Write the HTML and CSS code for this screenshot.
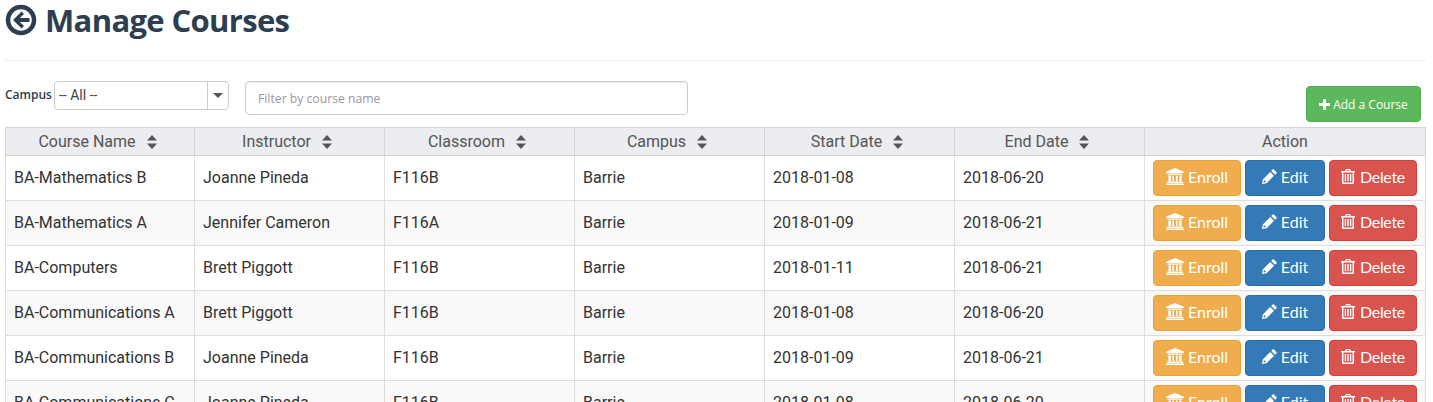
FILE: index.html
```html
<!DOCTYPE html>
<html lang="en">
<head>
<meta charset="utf-8">
<title>Manage Courses</title>
<link rel="stylesheet" href="styles.css">
</head>
<body>
<svg class="defs" width="0" height="0" aria-hidden="true">
  <symbol id="i-sort" viewBox="0 0 10 14"><path d="M5 0 10 5.600H0ZM0 8.400H10L5 14Z"/></symbol>
  <symbol id="i-bank" viewBox="0 0 18 17"><path d="M9 0 18 3.800V5H0V3.800ZM1.500 5.600H16.500V6.800H1.500ZM2.400 7.400H5V13H2.400ZM6.400 7.400H8V13H6.400ZM10 7.400H11.600V13H10ZM13 7.400H15.600V13H13ZM1.200 13.600H16.800V15H1.200ZM0 15.400H18V17H0Z"/></symbol>
  <symbol id="i-pencil" viewBox="0 0 15 15"><path d="M10.600.6a1 1 0 0 1 1.400 0l2.400 2.400a1 1 0 0 1 0 1.400L13 5.800 9.200 2ZM8.200 3 12 6.800 4.600 14.200 0 15l.8-4.600ZM2 10.900 1.500 13.500 4.100 13Z" fill-rule="evenodd"/></symbol>
  <symbol id="i-trash" viewBox="0 0 14 15"><path d="M5 0H9L10 2H14V3.600H13V13.200C13 14.200 12.400 15 11.600 15H2.400C1.600 15 1 14.200 1 13.200V3.600H0V2H4ZM5.500 1.200 5.200 2H8.800L8.500 1.200ZM2.500 3.600V13.200C2.500 13.400 2.600 13.500 2.700 13.500H11.300C11.400 13.500 11.500 13.400 11.500 13.200V3.600ZM3.700 5H5.100V12.200H3.700ZM6.300 5H7.700V12.200H6.300ZM8.900 5H10.300V12.200H8.900Z" fill-rule="evenodd"/></symbol>
</svg>
<header class="page-title">
  <svg class="back-icon" viewBox="0 0 32 32" aria-hidden="true">
    <circle cx="16" cy="16" r="13" fill="none" stroke="currentColor" stroke-width="4.500"/>
    <path d="M16.600 7.600 8 16l8.600 8.400 2.400-2.400-4.200-4H24.500v-4H14.800l4.200-4Z" fill="currentColor"/>
  </svg>
  <h1>Manage Courses</h1>
</header>
<hr class="rule">
<section class="filters">
  <div class="filter-left">
    <label class="campus-label">Campus</label>
    <div class="select-box">
      <span class="select-value">-- All --</span>
      <span class="select-arrow"><i></i></span>
    </div>
    <input class="name-filter" type="text" placeholder="Filter by course name">
  </div>
  <button class="btn add-btn"><svg class="plus" viewBox="0 0 12 12" aria-hidden="true"><path d="M4.400 0H7.600V4.400H12V7.600H7.600V12H4.400V7.600H0V4.400H4.400Z"/></svg>Add a Course</button>
</section>
<table class="courses">
  <thead>
    <tr>
      <th class="sortable"><span>Course Name</span><svg class="sort"><use href="#i-sort"/></svg></th>
      <th class="sortable"><span>Instructor</span><svg class="sort"><use href="#i-sort"/></svg></th>
      <th class="sortable"><span>Classroom</span><svg class="sort"><use href="#i-sort"/></svg></th>
      <th class="sortable"><span>Campus</span><svg class="sort"><use href="#i-sort"/></svg></th>
      <th class="sortable"><span>Start Date</span><svg class="sort"><use href="#i-sort"/></svg></th>
      <th class="sortable"><span>End Date</span><svg class="sort"><use href="#i-sort"/></svg></th>
      <th>Action</th>
    </tr>
  </thead>
  <tbody>
    <tr><td>BA-Mathematics B</td><td>Joanne Pineda</td><td>F116B</td><td>Barrie</td><td>2018-01-08</td><td>2018-06-20</td>
      <td class="actions"><a class="btn enroll"><svg class="ic ic-bank"><use href="#i-bank"/></svg>Enroll</a><a class="btn edit"><svg class="ic ic-pencil"><use href="#i-pencil"/></svg>Edit</a><a class="btn delete"><svg class="ic"><use href="#i-trash"/></svg>Delete</a></td></tr>
    <tr><td>BA-Mathematics A</td><td>Jennifer Cameron</td><td>F116A</td><td>Barrie</td><td>2018-01-09</td><td>2018-06-21</td>
      <td class="actions"><a class="btn enroll"><svg class="ic ic-bank"><use href="#i-bank"/></svg>Enroll</a><a class="btn edit"><svg class="ic ic-pencil"><use href="#i-pencil"/></svg>Edit</a><a class="btn delete"><svg class="ic"><use href="#i-trash"/></svg>Delete</a></td></tr>
    <tr><td>BA-Computers</td><td>Brett Piggott</td><td>F116B</td><td>Barrie</td><td>2018-01-11</td><td>2018-06-21</td>
      <td class="actions"><a class="btn enroll"><svg class="ic ic-bank"><use href="#i-bank"/></svg>Enroll</a><a class="btn edit"><svg class="ic ic-pencil"><use href="#i-pencil"/></svg>Edit</a><a class="btn delete"><svg class="ic"><use href="#i-trash"/></svg>Delete</a></td></tr>
    <tr><td>BA-Communications A</td><td>Brett Piggott</td><td>F116B</td><td>Barrie</td><td>2018-01-08</td><td>2018-06-20</td>
      <td class="actions"><a class="btn enroll"><svg class="ic ic-bank"><use href="#i-bank"/></svg>Enroll</a><a class="btn edit"><svg class="ic ic-pencil"><use href="#i-pencil"/></svg>Edit</a><a class="btn delete"><svg class="ic"><use href="#i-trash"/></svg>Delete</a></td></tr>
    <tr><td>BA-Communications B</td><td>Joanne Pineda</td><td>F116B</td><td>Barrie</td><td>2018-01-09</td><td>2018-06-21</td>
      <td class="actions"><a class="btn enroll"><svg class="ic ic-bank"><use href="#i-bank"/></svg>Enroll</a><a class="btn edit"><svg class="ic ic-pencil"><use href="#i-pencil"/></svg>Edit</a><a class="btn delete"><svg class="ic"><use href="#i-trash"/></svg>Delete</a></td></tr>
    <tr><td>BA-Communications C</td><td>Joanne Pineda</td><td>F116B</td><td>Barrie</td><td>2018-01-08</td><td>2018-06-20</td>
      <td class="actions"><a class="btn enroll"><svg class="ic ic-bank"><use href="#i-bank"/></svg>Enroll</a><a class="btn edit"><svg class="ic ic-pencil"><use href="#i-pencil"/></svg>Edit</a><a class="btn delete"><svg class="ic"><use href="#i-trash"/></svg>Delete</a></td></tr>
  </tbody>
</table>
</body>
</html>
```
FILE: styles.css
```css
* { box-sizing: border-box; }
html, body { height: 402px; overflow: hidden; }
body {
  margin: 0;
  padding: 0 7px 0 5px;
  background: #fff;
  color: #333;
  font-family: "Open Sans", sans-serif;
}
.defs { position: absolute; }
.page-title {
  display: flex;
  align-items: center;
  gap: 8px;
  height: 40px;
  color: #2c3e50;
}
.back-icon { width: 32px; height: 32px; flex: none; margin-top: -1px; }
.page-title h1 {
  margin: 0;
  font-size: 31px;
  line-height: 40px;
  font-weight: 700;
  letter-spacing: -0.65px;
}
.rule {
  margin: 20px 0 20px;
  border: 0;
  border-top: 1px solid #eee;
}
.filters {
  display: flex;
  justify-content: space-between;
  align-items: flex-start;
  height: 46px;
  padding-right: 5px;
}
.filter-left { display: flex; align-items: flex-start; }
.campus-label {
  width: 49px;
  font-size: 12px;
  font-weight: 600;
  line-height: 28px;
  color: #2c3e50;
}
.select-box {
  display: flex;
  width: 175px;
  height: 29px;
  border: 1px solid #ccc;
  border-radius: 4px;
  background: #fff;
}
.select-value {
  flex: 1;
  padding-left: 4px;
  font-family: Roboto, sans-serif;
  font-size: 14px;
  line-height: 26px;
  color: #444;
}
.select-arrow {
  display: flex;
  align-items: center;
  justify-content: center;
  width: 21px;
  border-left: 1px solid #ccc;
}
.select-arrow i {
  border-left: 5px solid transparent;
  border-right: 5px solid transparent;
  border-top: 5px solid #555;
}
.name-filter {
  width: 443px;
  height: 34px;
  margin-left: 16px;
  padding: 0 12px;
  border: 1px solid #ccc;
  border-radius: 4px;
  font-family: "Open Sans", sans-serif;
  font-size: 12.2px;
  box-shadow: inset 0 1px 1px rgba(0,0,0,.075);
}
.name-filter::placeholder { color: #999; opacity: 1; }
.btn {
  display: inline-flex;
  align-items: center;
  justify-content: center;
  border: 1px solid transparent;
  border-radius: 4px;
  color: #fff;
}
.add-btn {
  width: 115px;
  height: 36px;
  margin-top: 5px;
  background: #5cb85c;
  border-color: #4cae4c;
  font-family: "Open Sans", sans-serif;
  font-size: 12px;
  font-weight: 400;
  padding: 0;
}
.plus { width: 11px; height: 11px; margin-right: 3px; fill: #fff; }
.courses {
  width: 1421px;
  table-layout: fixed;
  border-collapse: collapse;
  font-family: Roboto, sans-serif;
  font-size: 16px;
  color: #333;
}
.courses th, .courses td { border: 1px solid #ddd; }
.courses th:nth-child(-n+6), .courses td:nth-child(-n+6) { width: 190px; }
.courses th:first-child { width: 189px; }
.courses th {
  height: 28px;
  padding: 0;
  background: #ebedf0;
  color: #555;
  font-weight: 400;
  text-align: center;
  vertical-align: middle;
  border-color: #d5d5d5;
}
.courses th.sortable { padding-right: 5px; }
.sort { width: 10px; height: 14px; margin-left: 11px; vertical-align: -2px; fill: #555; }
.courses td {
  height: 45px;
  padding: 0 8px 2px;
  vertical-align: middle;
  white-space: nowrap;
}
.courses tbody tr:nth-child(even) td { background: #f9f9f9; }
.courses td.actions {
  padding: 0 8px;
  font-size: 0;
  text-align: left;
}
.actions .btn {
  height: 36px;
  margin-right: 4px;
  padding-bottom: 3px;
  vertical-align: top;
  font-family: Lato, sans-serif;
  font-size: 16px;
}
.actions .btn:last-child { margin-right: 0; }
.enroll { width: 88px; background: #f0ad4e; border-color: #eea236; }
.edit { width: 80px; background: #337ab7; border-color: #2e6da4; }
.actions .delete { width: 88px; background: #d9534f; border-color: #d43f3a; letter-spacing: -0.3px; }
.ic { width: 14px; height: 15px; margin-right: 5px; fill: #fff; }
.ic-pencil { width: 15px; margin-right: 4px; }
.ic-bank { width: 18px; height: 17px; margin-right: 4px; }
```
